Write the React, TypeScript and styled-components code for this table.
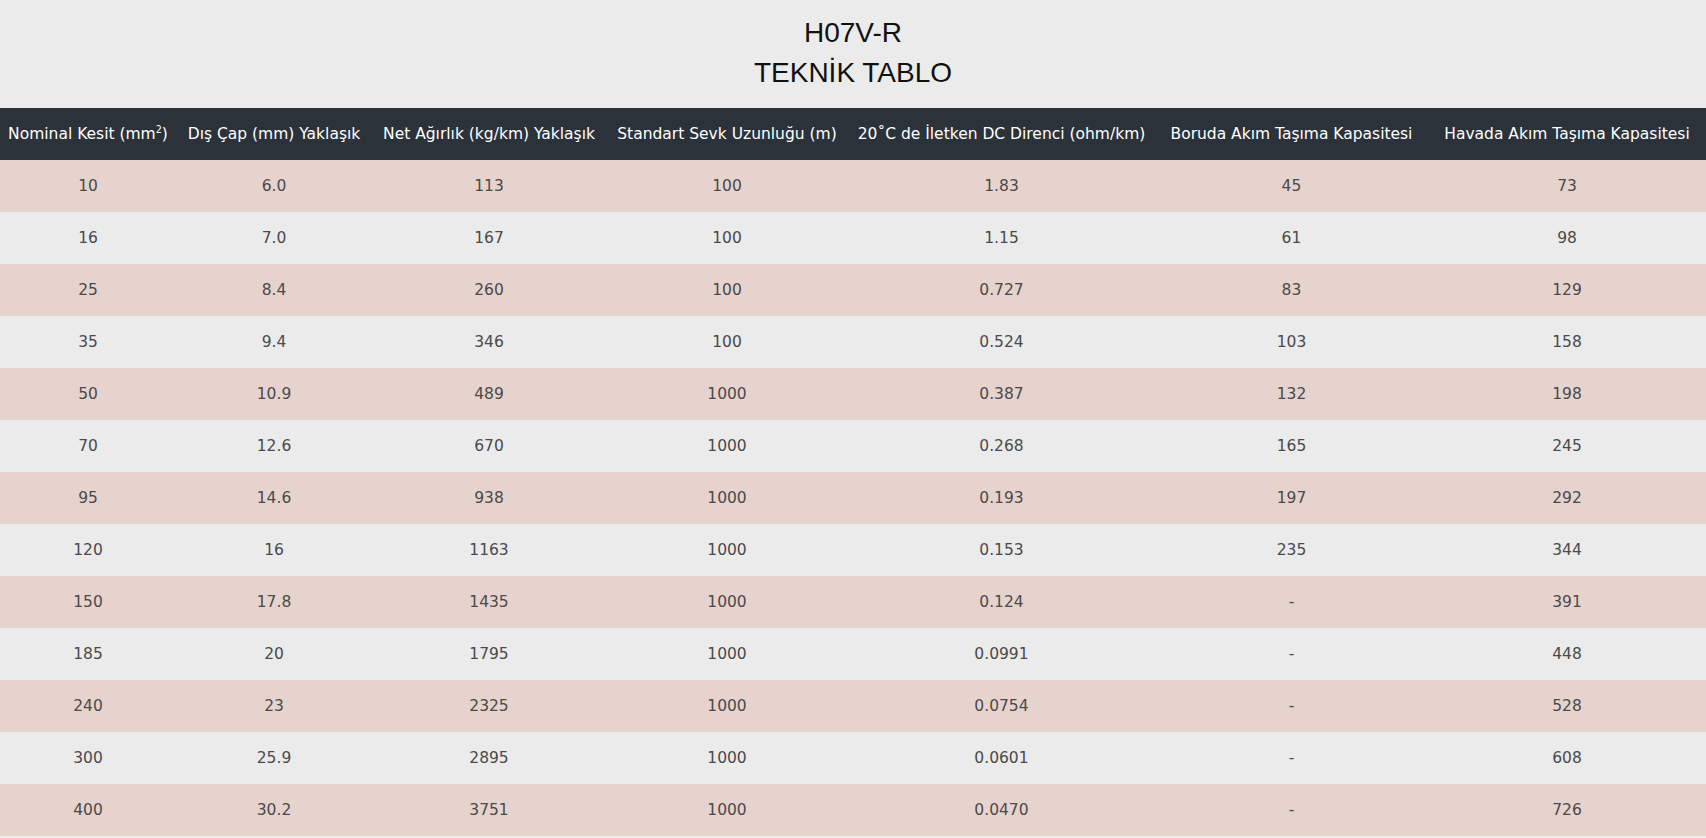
import React from 'react';
import styled, { createGlobalStyle } from 'styled-components';

const GlobalStyle = createGlobalStyle`
  html, body {
    margin: 0;
    padding: 0;
    background: #ebebeb;
  }
  body {
    font-family: "DejaVu Sans", "Liberation Sans", sans-serif;
  }
`;

const Page = styled.div`
  width: 100%;
  background: #ebebeb;
`;

const TitleBlock = styled.header`
  padding: 13px 0 15px;
  text-align: center;
`;

const TitleLine = styled.h1`
  margin: 0;
  font-family: "Liberation Sans", Arial, sans-serif;
  font-size: 28px;
  line-height: 40px;
  font-weight: 400;
  color: #111111;
`;

const Table = styled.table`
  width: 100%;
  border-collapse: collapse;
  table-layout: fixed;
`;

const HeadCell = styled.th`
  height: 52px;
  padding: 0;
  background: #2b3239;
  color: #ffffff;
  font-size: 15.5px;
  font-weight: 400;
  white-space: nowrap;
  text-align: center;
  vertical-align: middle;
`;

const Row = styled.tr`
  background: #ebebeb;
  &:nth-child(odd) {
    background: #e6d3cd;
  }
`;

const Cell = styled.td`
  height: 52px;
  padding: 0;
  font-size: 15.5px;
  color: #4a4a4a;
  text-align: center;
  vertical-align: middle;
`;

const Sup = styled.sup`
  font-size: 0.62em;
  line-height: 0;
`;

const colWidths = [176, 196, 234, 242, 307, 273, 278];

const headers: React.ReactNode[] = [
  <>Nominal Kesit (mm<Sup>2</Sup>)</>,
  'Dış Çap (mm) Yaklaşık',
  'Net Ağırlık (kg/km) Yaklaşık',
  'Standart Sevk Uzunluğu (m)',
  '20˚C de İletken DC Direnci (ohm/km)',
  'Boruda Akım Taşıma Kapasitesi',
  'Havada Akım Taşıma Kapasitesi',
];

const rows: string[][] = [
  ['10', '6.0', '113', '100', '1.83', '45', '73'],
  ['16', '7.0', '167', '100', '1.15', '61', '98'],
  ['25', '8.4', '260', '100', '0.727', '83', '129'],
  ['35', '9.4', '346', '100', '0.524', '103', '158'],
  ['50', '10.9', '489', '1000', '0.387', '132', '198'],
  ['70', '12.6', '670', '1000', '0.268', '165', '245'],
  ['95', '14.6', '938', '1000', '0.193', '197', '292'],
  ['120', '16', '1163', '1000', '0.153', '235', '344'],
  ['150', '17.8', '1435', '1000', '0.124', '-', '391'],
  ['185', '20', '1795', '1000', '0.0991', '-', '448'],
  ['240', '23', '2325', '1000', '0.0754', '-', '528'],
  ['300', '25.9', '2895', '1000', '0.0601', '-', '608'],
  ['400', '30.2', '3751', '1000', '0.0470', '-', '726'],
];

export default function App() {
  return (
    <Page>
      <GlobalStyle />
      <TitleBlock>
        <TitleLine>H07V-R</TitleLine>
        <TitleLine>TEKNİK TABLO</TitleLine>
      </TitleBlock>
      <Table>
        <colgroup>
          {colWidths.map((w, i) => (
            <col key={i} style={{ width: `${(w / 1706) * 100}%` }} />
          ))}
        </colgroup>
        <thead>
          <tr>
            {headers.map((h, i) => (
              <HeadCell key={i}>{h}</HeadCell>
            ))}
          </tr>
        </thead>
        <tbody>
          {rows.map((r, i) => (
            <Row key={i}>
              {r.map((v, j) => (
                <Cell key={j}>{v}</Cell>
              ))}
            </Row>
          ))}
        </tbody>
      </Table>
    </Page>
  );
}
